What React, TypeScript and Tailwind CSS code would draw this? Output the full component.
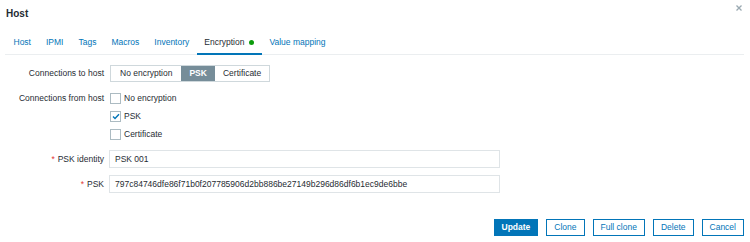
import React from "react";

const tabs = ["Host", "IPMI", "Tags", "Macros", "Inventory", "Encryption", "Value mapping"];

function Check({ checked, label }: { checked?: boolean; label: string }) {
  return (
    <div className="flex h-[11px] items-center gap-[3px]">
      <span className="flex h-[11px] w-[11px] items-center justify-center border border-[#acbbc2] bg-white">
        {checked && (
          <svg width="8" height="7" viewBox="0 0 8 7">
            <path d="M1 3.6 L3 5.5 L7 1.2" fill="none" stroke="#0275b8" strokeWidth="1.4" />
          </svg>
        )}
      </span>
      <span className="leading-[11px]">{label}</span>
    </div>
  );
}

export default function App() {
  return (
    <div
      className="relative h-[242px] w-[750px] overflow-hidden bg-white text-[8.5px] text-[#1f2c33]"
      style={{ fontFamily: '"Liberation Sans", Arial, sans-serif' }}
    >
      <div className="flex h-[27px] items-start justify-between pl-[6px] pr-[8px]">
        <div className="pt-[7px] text-[10px] font-bold leading-[13px]">Host</div>
        <svg className="mt-[5px]" width="6" height="6" viewBox="0 0 6 6">
          <path d="M0.5 0.5 L5.5 5.5 M5.5 0.5 L0.5 5.5" stroke="#9aa9b1" strokeWidth="1.3" />
        </svg>
      </div>

      <div className="ml-[5px] mr-[6px] mt-[5px] flex border-b border-[#ebeef0] pl-[1px]">
        {tabs.map((t) => {
          const active = t === "Encryption";
          return (
            <div
              key={t}
              className={
                "-mb-px flex h-[23px] items-center gap-[5px] border-b-2 px-[7.5px] leading-none " +
                (active ? "border-[#0275b8] text-[#1f2c33]" : "border-transparent text-[#0275b8]")
              }
            >
              <span>{t}</span>
              {active && <span className="h-[5px] w-[5px] rounded-full bg-[#0b9b0b]" />}
            </div>
          );
        })}
      </div>

      <div className="mt-[10px] grid grid-cols-[104px_auto] items-start gap-x-[6px]">
        <div className="flex h-[17px] items-center justify-end">Connections to host</div>
        <div className="flex">
          <div className="flex h-[17px] border border-[#cfd8dc]">
            <div className="flex items-center px-[9px]">No encryption</div>
            <div className="flex items-center bg-[#768d99] px-[8px] font-bold text-white">PSK</div>
            <div className="flex items-center px-[8px]">Certificate</div>
          </div>
        </div>

        <div className="mt-[11px] flex h-[11px] items-center justify-end">Connections from host</div>
        <div className="mt-[11px] flex flex-col gap-[7px]">
          <Check label="No encryption" />
          <Check checked label="PSK" />
          <Check label="Certificate" />
        </div>

        <div className="mt-[10px] flex h-[18px] items-center justify-end">
          <span className="mr-[3px] text-[#e33734]">*</span>PSK identity
        </div>
        <div className="-ml-[1px] mt-[10px]">
          <div className="flex h-[18px] w-[391px] items-center border border-[#dfe4e7] px-[5px]">PSK 001</div>
        </div>

        <div className="mt-[7px] flex h-[18px] items-center justify-end">
          <span className="mr-[3px] text-[#e33734]">*</span>PSK
        </div>
        <div className="-ml-[1px] mt-[7px]">
          <div className="flex h-[18px] w-[391px] items-center border border-[#dfe4e7] px-[5px]">
            797c84746dfe86f71b0f207785906d2bb886be27149b296d86df6b1ec9de6bbe
          </div>
        </div>
      </div>

      <div className="mr-[6px] mt-[26px] flex justify-end gap-[8px]">
        <div className="flex h-[17px] items-center border border-[#0275b8] bg-[#0275b8] px-[7px] font-bold text-white">
          Update
        </div>
        {["Clone", "Full clone", "Delete", "Cancel"].map((b) => (
          <div key={b} className="flex h-[17px] items-center border border-[#0275b8] px-[7px] text-[#0275b8]">
            {b}
          </div>
        ))}
      </div>
    </div>
  );
}
